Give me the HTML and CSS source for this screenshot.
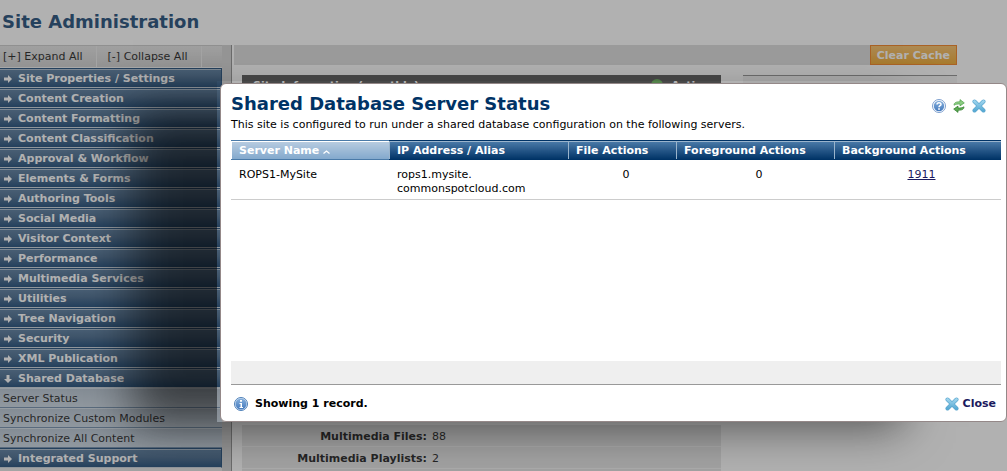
FILE: index.html
```html
<!DOCTYPE html>
<html lang="en">
<head>
    <meta charset="UTF-8">
    <meta name="viewport" content="width=device-width, initial-scale=1.0">
    <title>Site Administration</title>
    <link rel="stylesheet" href="styles.css">
</head>
<body>

    <!-- shared icons -->
    <svg class="sprite" aria-hidden="true">
        <defs>
            <linearGradient id="blue" x1="0" y1="0" x2="0" y2="1">
                <stop offset="0" stop-color="#86b0dd"/>
                <stop offset="1" stop-color="#4379bd"/>
            </linearGradient>
            <linearGradient id="cyan" x1="0" y1="0" x2="0" y2="1">
                <stop offset="0" stop-color="#9ad2ec"/>
                <stop offset="1" stop-color="#5aabd4"/>
            </linearGradient>
        </defs>
        <symbol id="arrow" viewBox="0 0 8 8"><path d="M0 2.500h4V0l4 4-4 4V5.500H0z" fill="#fff"/></symbol>
        <symbol id="cross" viewBox="0 0 14 14">
            <path d="M2.500 2.500L11.500 11.500M11.500 2.500L2.500 11.500" stroke="#5ba6ce" stroke-width="4" stroke-linecap="round"/>
            <path d="M2.500 2.500L11.500 11.500M11.500 2.500L2.500 11.500" stroke="url(#cyan)" stroke-width="2.800" stroke-linecap="round"/>
        </symbol>
    </svg>

    <h1 class="page-title">Site Administration</h1>

    <div class="page">
        <nav class="sidebar">
            <div class="tree-tools">
                <button type="button">[+] Expand All</button>
                <button type="button">[-] Collapse All</button>
            </div>
            <ul class="menu">
                <li><a href="#"><svg><use href="#arrow"/></svg>Site Properties / Settings</a></li>
                <li><a href="#"><svg><use href="#arrow"/></svg>Content Creation</a></li>
                <li><a href="#"><svg><use href="#arrow"/></svg>Content Formatting</a></li>
                <li><a href="#"><svg><use href="#arrow"/></svg>Content Classification</a></li>
                <li><a href="#"><svg><use href="#arrow"/></svg>Approval &amp; Workflow</a></li>
                <li><a href="#"><svg><use href="#arrow"/></svg>Elements &amp; Forms</a></li>
                <li><a href="#"><svg><use href="#arrow"/></svg>Authoring Tools</a></li>
                <li><a href="#"><svg><use href="#arrow"/></svg>Social Media</a></li>
                <li><a href="#"><svg><use href="#arrow"/></svg>Visitor Context</a></li>
                <li><a href="#"><svg><use href="#arrow"/></svg>Performance</a></li>
                <li><a href="#"><svg><use href="#arrow"/></svg>Multimedia Services</a></li>
                <li><a href="#"><svg><use href="#arrow"/></svg>Utilities</a></li>
                <li><a href="#"><svg><use href="#arrow"/></svg>Tree Navigation</a></li>
                <li><a href="#"><svg><use href="#arrow"/></svg>Security</a></li>
                <li><a href="#"><svg><use href="#arrow"/></svg>XML Publication</a></li>
                <li class="open">
                    <a href="#"><svg><use href="#arrow"/></svg>Shared Database</a>
                    <ul class="submenu">
                        <li><a href="#">Server Status</a></li>
                        <li><a href="#">Synchronize Custom Modules</a></li>
                        <li><a href="#">Synchronize All Content</a></li>
                    </ul>
                </li>
                <li><a href="#"><svg><use href="#arrow"/></svg>Integrated Support</a></li>
            </ul>
        </nav>

        <div class="splitter"></div>

        <main class="content">
            <div class="toolbar">
                <button type="button" class="clear-cache">Clear Cache</button>
            </div>
            <div class="panels">
                <section class="info">
                    <h2 class="info-header">
                        <span>Site Information (monthly)</span>
                        <span class="state"><i class="dot"></i>Active</span>
                    </h2>
                    <dl class="stats">
                        <div><dt>Multimedia Files:</dt><dd>88</dd></div>
                        <div><dt>Multimedia Playlists:</dt><dd>2</dd></div>
                        <div></div>
                    </dl>
                </section>
                <aside class="side-panel"></aside>
            </div>
        </main>
    </div>

    <div class="overlay"></div>

    <div class="dialog-frame">
        <div class="dialog" role="dialog" aria-labelledby="dialog-title">
            <div class="dialog-header">
                <h2 id="dialog-title">Shared Database Server Status</h2>
                <div class="dialog-tools">
                    <button type="button" aria-label="Help">
                        <svg viewBox="0 0 14 14">
                            <circle cx="7" cy="7" r="6.500" fill="#fff" stroke="#7d9fce"/>
                            <circle cx="7" cy="7" r="5.200" fill="url(#blue)"/>
                            <path d="M5 5.600C5 3.200 9 3.200 9 5.400 9 6.800 7 6.700 7 8.200" fill="none" stroke="#fff" stroke-width="1.500"/>
                            <rect x="6.200" y="9.200" width="1.600" height="1.600" fill="#fff"/>
                        </svg>
                    </button>
                    <button type="button" aria-label="Refresh">
                        <svg viewBox="0 0 14 14">
                            <path d="M2 6.200C2 3.700 4 2.700 8 2.700V.6L12.300 3.900 8 6.900V5C5 5 4 5.200 2 6.200z" fill="#8ccc82" stroke="#4fa04a" stroke-width=".7"/>
                            <path d="M12 7.800c0 2.500-2 3.500-6 3.500v2.100L1.700 10.100 6 7.100V9c3 0 4-.2 6-1.200z" fill="#5cab53" stroke="#2f7a2b" stroke-width=".7"/>
                        </svg>
                    </button>
                    <button type="button" aria-label="Close"><svg><use href="#cross"/></svg></button>
                </div>
            </div>
            <p class="intro">This site is configured to run under a shared database configuration on the following servers.</p>

            <div class="table-area">
                <table class="servers">
                    <colgroup>
                        <col class="col-name">
                        <col class="col-address">
                        <col class="col-file">
                        <col class="col-foreground">
                        <col>
                    </colgroup>
                    <thead>
                        <tr>
                            <th class="sorted">Server Name<svg viewBox="0 0 7 4"><path d="M.5 3.500L3.500 1l3 2.500" fill="none" stroke="#fff" stroke-width="1.300"/></svg></th>
                            <th>IP Address / Alias</th>
                            <th>File Actions</th>
                            <th>Foreground Actions</th>
                            <th>Background Actions</th>
                        </tr>
                    </thead>
                    <tbody>
                        <tr>
                            <td>ROPS1-MySite</td>
                            <td>rops1.mysite.<br>commonspotcloud.com</td>
                            <td class="count">0</td>
                            <td class="count">0</td>
                            <td class="count"><a href="#">1911</a></td>
                        </tr>
                    </tbody>
                </table>
            </div>

            <div class="dialog-bar"></div>
            <div class="dialog-footer">
                <div class="record-count">
                    <svg viewBox="0 0 14 14">
                        <circle cx="7" cy="7" r="6.500" fill="#dce8f6" stroke="#4d7fb8"/>
                        <circle cx="7" cy="7" r="5.500" fill="url(#blue)"/>
                        <path d="M6 3h2v1.700H6zM5.500 6H8v4h1v1H5.500v-1h1V7h-1z" fill="#fff"/>
                    </svg>
                    <span>Showing 1 record.</span>
                </div>
                <button type="button" class="close"><svg><use href="#cross"/></svg>Close</button>
            </div>
        </div>
    </div>

</body>
</html>
```
FILE: styles.css
```css
* {
    box-sizing: border-box;
}

body {
    margin: 0;
    height: 100vh;
    overflow: hidden;
    background-color: #fff;
    color: #000;
    font-family: Verdana, "DejaVu Sans", sans-serif;
    font-size: 11px;
    line-height: 14px;
}

button {
    padding: 0;
    border: none;
    background: none;
    color: inherit;
    font: inherit;
    cursor: pointer;
}

ul {
    margin: 0;
    padding: 0;
    list-style: none;
}

.sprite {
    position: absolute;
    width: 0;
    height: 0;
}

.page-title {
    height: 45px;
    margin: 0;
    padding: 10px 2px;
    color: #003366;
    font-size: 18px;
    line-height: 23px;
}

.page {
    display: flex;
}

/* sidebar */
.sidebar {
    width: 222px;
    background-color: #e8e8e8;
}

.tree-tools {
    display: flex;
    height: 23px;
    border-top: 1px solid #c4c4c4;
    border-bottom: 1px solid #eee;
    background: linear-gradient(#e0e0e0, #c8c8c8);
}

.tree-tools button {
    padding: 0 13px 0 3px;
    border-right: 1px solid #e8e8e8;
}

.tree-tools button + button {
    padding: 0 13px 0 11px;
}

.menu > li > a {
    display: flex;
    align-items: center;
    gap: 6px;
    height: 20px;
    padding: 1px 0 0 4px;
    border-top: 1px solid #003366;
    border-right: 1px solid #003366;
    border-bottom: 1px solid #c4ced8;
    background: linear-gradient(#a0b4c8 1px, #40688f 1px, #30577f 8px, #003366);
    color: #fff;
    font-weight: bold;
    text-decoration: none;
}

.menu svg {
    width: 8px;
    height: 8px;
}

.menu .open > a svg {
    transform: rotate(90deg);
}

.submenu a {
    display: block;
    height: 20px;
    padding: 3px;
    border-top: 1px solid #cdd9e4;
    border-bottom: 1px solid #5f7fa0;
    background: linear-gradient(#aebdcc, #c4d2df);
    color: #000;
    text-decoration: none;
}

.splitter {
    width: 10px;
    height: 426px;
    border-right: 1px solid #808080;
    background-color: #cdcdcd;
}

/* main area */
.content {
    flex: 1;
    padding: 0 50px 0 2px;
}

.toolbar {
    display: flex;
    justify-content: flex-end;
    height: 20px;
    background-color: #d8d8d8;
}

.clear-cache {
    padding: 1px 6px 0;
    border: 1px solid #f07000;
    background: linear-gradient(#f8b855, #ee9c10);
    color: #fff;
    font-weight: bold;
}

.panels {
    display: flex;
    align-items: flex-start;
    gap: 22px;
    padding: 10px 0 0 8px;
}

.info {
    flex: 1;
}

.info-header {
    display: flex;
    justify-content: space-between;
    margin: 0;
    padding: 4px 11px;
    background-color: #404040;
    color: #fff;
    font-size: 11px;
    line-height: 14px;
}

.state {
    display: flex;
    gap: 8px;
}

.dot {
    width: 12px;
    height: 12px;
    border-radius: 50%;
    background-color: #55aa44;
}

.stats {
    margin: 328px 0 0;
    background-color: #e4e4e4;
}

.stats div {
    display: flex;
    gap: 5px;
    height: 22px;
    padding-top: 5px;
    border-bottom: 1px solid #f4f4f4;
}

.stats dt {
    width: 185px;
    font-weight: bold;
    text-align: right;
}

.stats dd {
    margin: 0;
}

.side-panel {
    width: 214px;
    height: 100px;
    border-top: 1px solid #808080;
    background-color: #f2f2f2;
}

/* dialog */
.overlay {
    position: fixed;
    inset: 0;
    background-color: rgba(82, 82, 82, .45);
}

.dialog-frame {
    position: fixed;
    top: 81px;
    right: 0;
    left: 217px;
    padding: 2px 0 0 3px;
    box-shadow: -94px 15px 44px -10px rgba(0, 0, 0, .55);
}

.dialog {
    padding: 10px 5px 10px 10px;
    border: 1px solid #948888;
    border-radius: 6px;
    background-color: #fff;
}

.dialog-header {
    display: flex;
    align-items: center;
    justify-content: space-between;
    padding-right: 15px;
}

.dialog-header h2 {
    margin: 0;
    color: #003366;
    font-size: 18px;
    line-height: 20px;
}

.dialog-tools {
    display: flex;
    gap: 6px;
    padding-top: 4px;
}

.dialog svg {
    display: block;
    width: 14px;
    height: 14px;
}

.intro {
    margin: 4px 0 8px;
}

.table-area {
    min-height: 221px;
}

.servers {
    width: 100%;
    border-collapse: collapse;
    table-layout: fixed;
}

.col-name,
.col-foreground {
    width: 158px;
}

.col-address {
    width: 179px;
}

.col-file {
    width: 108px;
}

.servers th {
    height: 19px;
    padding: 3px 7px 1px 8px;
    border: solid #003366;
    border-width: 1px 0;
    background: linear-gradient(#4a7aa8, #003366);
    box-shadow: inset 1px 1px 0 #9ab4cc;
    color: #fff;
    text-align: left;
    white-space: nowrap;
}

.servers .sorted {
    border-color: #4a7aa8;
    background: linear-gradient(#b8cce0, #82a8cc);
    box-shadow: inset 1px 1px 0 #fff;
}

.servers th svg {
    display: inline-block;
    width: 7px;
    height: 4px;
    margin-left: 4px;
}

.servers td {
    height: 40px;
    padding: 8px 0 3px 8px;
    border-bottom: 1px solid #ccc;
    vertical-align: top;
}

.servers .count {
    text-align: center;
}

.servers a {
    color: #1a1a5e;
}

.dialog-bar {
    height: 24px;
    border-bottom: 1px solid #999;
    background-color: #efefef;
}

.dialog-footer {
    display: flex;
    align-items: center;
    justify-content: space-between;
    padding: 12px 5px 0 3px;
    font-weight: bold;
}

.record-count,
.close {
    display: flex;
    align-items: center;
    gap: 7px;
}

.close {
    gap: 4px;
    color: #1a1a5e;
    font-weight: bold;
}
```
